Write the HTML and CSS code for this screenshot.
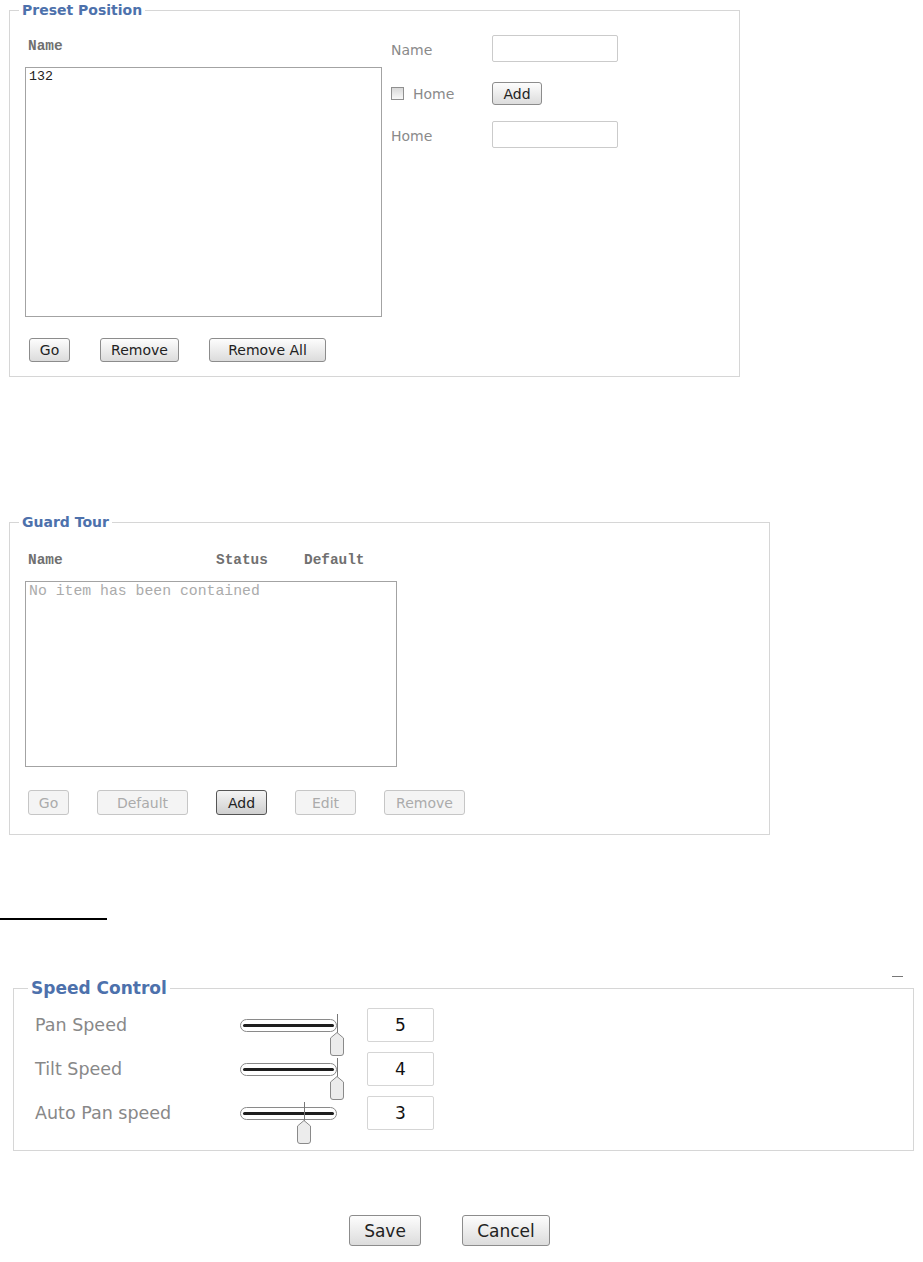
FILE: index.html
```html
<!DOCTYPE html>
<html lang="en">

<head>
    <meta charset="UTF-8">
    <meta name="viewport" content="width=device-width, initial-scale=1.0">
    <title>PTZ Settings</title>
    <link rel="stylesheet" href="styles.css">
</head>

<body>
    <!-- Preset positions -->
    <fieldset class="panel preset">
        <legend>Preset Position</legend>
        <div class="preset-body">
            <div class="list-col">
                <div class="list-head">Name</div>
                <div class="list-box preset-list">
                    <div class="list-item">132</div>
                </div>
                <div class="btn-row preset-btns">
                    <button class="btn w-go">Go</button>
                    <button class="btn w-remove">Remove</button>
                    <button class="btn w-remove-all">Remove All</button>
                </div>
            </div>

            <div class="preset-form">
                <div class="form-row">
                    <label class="form-label" for="presetName">Name</label>
                    <input type="text" id="presetName" class="text-field">
                </div>
                <div class="form-row row-check">
                    <label class="form-label check-label"><input type="checkbox" class="check"> Home</label>
                    <button class="btn w-add">Add</button>
                </div>
                <div class="form-row row-home">
                    <label class="form-label" for="homeName">Home</label>
                    <input type="text" id="homeName" class="text-field">
                </div>
            </div>
        </div>
    </fieldset>

    <!-- Guard tour -->
    <fieldset class="panel guard">
        <legend>Guard Tour</legend>
        <div class="guard-body">
            <div class="list-head guard-head">
                <span>Name</span>
                <span>Status</span>
                <span>Default</span>
            </div>
            <div class="list-box guard-list">No item has been contained</div>
            <div class="btn-row guard-btns">
                <button class="btn w-go2" disabled>Go</button>
                <button class="btn w-default" disabled>Default</button>
                <button class="btn btn-active w-add2">Add</button>
                <button class="btn w-edit" disabled>Edit</button>
                <button class="btn w-remove2" disabled>Remove</button>
            </div>
        </div>
    </fieldset>

    <div class="divider"></div>

    <!-- Speed control -->
    <div class="speed-wrap">
        <span class="collapse-mark"></span>
        <fieldset class="panel speed">
            <legend>Speed Control</legend>
            <div class="speed-body">
                <div class="speed-row">
                    <span class="speed-label">Pan Speed</span>
                    <svg class="slider" viewBox="0 0 110 34">
                        <rect x="4.5" y="11.5" width="96" height="12" rx="6" fill="#fff" stroke="#8a8a8a"/>
                        <line x1="8.5" y1="17.5" x2="96.5" y2="17.5" stroke="#1e1e1e" stroke-width="3" stroke-linecap="round"/>
                        <line x1="101.5" y1="6" x2="101.5" y2="25" stroke="#777"/>
                        <path d="M94.5 30 L101 24.5 L107.5 30 V45 Q107.5 47.5 105 47.5 H97 Q94.5 47.5 94.5 45 Z" fill="#ececec" stroke="#8a8a8a"/>
                    </svg>
                    <input type="text" class="speed-value" value="5">
                </div>
                <div class="speed-row">
                    <span class="speed-label">Tilt Speed</span>
                    <svg class="slider" viewBox="0 0 110 34">
                        <rect x="4.5" y="11.5" width="96" height="12" rx="6" fill="#fff" stroke="#8a8a8a"/>
                        <line x1="8.5" y1="17.5" x2="96.5" y2="17.5" stroke="#1e1e1e" stroke-width="3" stroke-linecap="round"/>
                        <line x1="101.5" y1="6" x2="101.5" y2="25" stroke="#777"/>
                        <path d="M94.5 30 L101 24.5 L107.5 30 V45 Q107.5 47.5 105 47.5 H97 Q94.5 47.5 94.5 45 Z" fill="#ececec" stroke="#8a8a8a"/>
                    </svg>
                    <input type="text" class="speed-value" value="4">
                </div>
                <div class="speed-row">
                    <span class="speed-label">Auto Pan speed</span>
                    <svg class="slider" viewBox="0 0 110 34">
                        <rect x="4.5" y="11.5" width="96" height="12" rx="6" fill="#fff" stroke="#8a8a8a"/>
                        <line x1="8.5" y1="17.5" x2="96.5" y2="17.5" stroke="#1e1e1e" stroke-width="3" stroke-linecap="round"/>
                        <line x1="68.5" y1="6" x2="68.5" y2="25" stroke="#777"/>
                        <path d="M61.5 30 L68 24.5 L74.5 30 V45 Q74.5 47.5 72 47.5 H64 Q61.5 47.5 61.5 45 Z" fill="#ececec" stroke="#8a8a8a"/>
                    </svg>
                    <input type="text" class="speed-value" value="3">
                </div>
            </div>
        </fieldset>
    </div>

    <div class="save-row">
        <button class="btn btn-big w-save">Save</button>
        <button class="btn btn-big w-cancel">Cancel</button>
    </div>
</body>

</html>
```

FILE: styles.css
```css
* {
    box-sizing: border-box;
}

body {
    margin: 0;
    font-family: "DejaVu Sans", Verdana, sans-serif;
    color: #333;
    background: #fff;
}

.panel {
    border: 1px solid #d6d6d6;
    padding: 0;
    margin: 0;
    min-width: 0;
}

.panel legend {
    padding: 0 3px;
    margin-left: 9px;
    font-size: 14px;
    line-height: 16px;
    font-weight: bold;
    color: #4d71ac;
}

/* preset position */
.preset {
    width: 731px;
    margin: 2px 0 0 9px;
}

.preset-body {
    display: flex;
    padding: 0 15px 14px 15px;
}

.list-col {
    width: 357px;
}

.list-head {
    font-family: "Liberation Mono", "Courier New", monospace;
    font-weight: bold;
    font-size: 14.4px;
    line-height: 18px;
    color: #707070;
    padding: 19px 0 0 3px;
    margin-bottom: 12px;
}

.list-box {
    border: 1px solid #a3a3a3;
    background: #fff;
    font-family: "Liberation Mono", "Courier New", monospace;
    padding: 1px 3px;
    line-height: 16px;
}

.preset-list {
    height: 250px;
    font-size: 13.3px;
    color: #222;
}

.btn-row {
    display: flex;
}

.preset-btns {
    gap: 30px;
    margin-top: 21px;
    padding-left: 4px;
}

.btn {
    height: 24px;
    padding: 0;
    font-family: "DejaVu Sans", Verdana, sans-serif;
    font-size: 14px;
    color: #222;
    background: linear-gradient(#fdfdfd, #dcdcdc);
    border: 1px solid #8c8c8c;
    border-radius: 3px;
}

.btn[disabled] {
    color: #ababab;
    border-color: #c6c6c6;
    background: #f4f4f4;
}

.btn-active {
    border-color: #555;
    background: linear-gradient(#f4f4f4, #cfcfcf);
}

.w-go { width: 41px; }
.w-remove { width: 79px; }
.w-remove-all { width: 117px; }
.w-add { width: 50px; height: 23px; }

.preset-form {
    margin-left: 9px;
    padding-top: 17px;
}

.form-row {
    display: flex;
    align-items: center;
}

.form-label {
    width: 101px;
    padding-top: 3px;
    font-size: 14px;
    color: #8a8a8a;
}

.text-field {
    width: 126px;
    height: 27px;
    margin: 0;
    border: 1px solid #cbcbcb;
    border-radius: 2px;
}

.row-check {
    margin-top: 20px;
}

.row-home {
    margin-top: 16px;
}

.check-label {
    display: flex;
    align-items: center;
    gap: 9px;
    padding-top: 0;
}

.check {
    appearance: none;
    width: 13px;
    height: 13px;
    margin: 0;
    border: 1px solid #8f8f8f;
    background: linear-gradient(#d8d8d8, #f8f8f8);
}

/* guard tour */
.guard {
    width: 761px;
    margin: 137px 0 0 9px;
}

.guard-body {
    padding: 0 15px 19px 15px;
}

.guard-head {
    display: grid;
    grid-template-columns: 188px 88px auto;
    padding-top: 21px;
}

.guard-list {
    width: 372px;
    height: 186px;
    font-size: 14.8px;
    color: #ababab;
}

.guard-btns {
    gap: 28px;
    margin-top: 23px;
    padding-left: 3px;
}

.guard-btns .btn {
    height: 25px;
}

.w-go2 { width: 41px; }
.w-default { width: 91px; }
.w-add2 { width: 51px; }
.w-edit { width: 61px; }
.w-remove2 { width: 81px; }

.divider {
    width: 107px;
    height: 2px;
    background: #000;
    margin-top: 83px;
}

/* speed control */
.speed-wrap {
    position: relative;
    margin-top: 58px;
}

.collapse-mark {
    position: absolute;
    top: -2px;
    left: 892px;
    width: 11px;
    height: 1px;
    background: #777;
}

.speed {
    width: 901px;
    margin-left: 13px;
}

.speed legend {
    margin-left: 14px;
    font-size: 17px;
    line-height: 20px;
}

.speed-body {
    display: flex;
    flex-direction: column;
    gap: 10px;
    padding: 10px 0 20px 21px;
}

.speed-row {
    display: flex;
    align-items: center;
    height: 34px;
}

.speed-label {
    width: 201px;
    font-size: 17.5px;
    color: #888;
}

.slider {
    width: 110px;
    height: 34px;
    overflow: visible;
}

.speed-value {
    width: 67px;
    height: 34px;
    margin: 0 0 0 21px;
    border: 1px solid #d5d5d5;
    border-radius: 2px;
    text-align: center;
    font-family: "DejaVu Sans", Verdana, sans-serif;
    font-size: 17px;
    color: #111;
}

.save-row {
    display: flex;
    gap: 41px;
    margin-top: 64px;
    padding-left: 349px;
}

.btn-big {
    height: 31px;
    font-size: 17px;
}

.w-save { width: 72px; }
.w-cancel { width: 88px; }
```
